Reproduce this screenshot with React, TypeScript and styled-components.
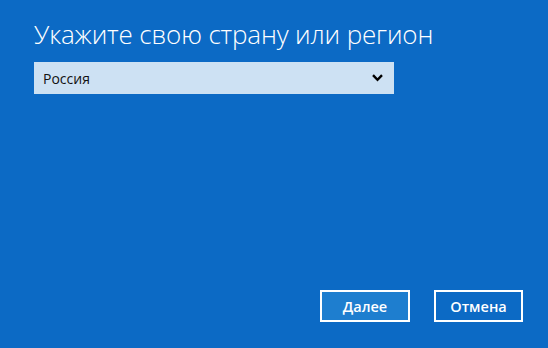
import React from "react";
import styled, { createGlobalStyle } from "styled-components";

const Global = createGlobalStyle`
  html, body { margin: 0; padding: 0; }
  body { background: #0c6ac5; width: 548px; height: 348px; overflow: hidden; }
`;

const Page = styled.div`
  box-sizing: border-box;
  width: 548px;
  height: 348px;
  background: #0c6ac5;
  padding: 18px 25px 26px 34px;
  display: flex;
  flex-direction: column;
  font-family: "Open Sans", "Noto Sans", sans-serif;
`;

const Title = styled.h1`
  margin: 0;
  font-family: "Open Sans", "Noto Sans", sans-serif;
  font-weight: 300;
  font-size: 26px;
  line-height: 32px;
  color: #ffffff;
  letter-spacing: -0.15px;
`;

const Select = styled.div`
  margin-top: 12px;
  width: 360px;
  height: 32px;
  box-sizing: border-box;
  background: #cde1f3;
  display: flex;
  align-items: center;
  justify-content: space-between;
  padding: 0 11px 0 9px;
  font-family: "Open Sans", "Noto Sans", sans-serif;
  font-size: 14px;
  color: #111;
`;

const Footer = styled.div`
  margin-top: auto;
  display: flex;
  justify-content: flex-end;
  gap: 24px;
`;

const Button = styled.button<{ $primary?: boolean }>`
  box-sizing: border-box;
  width: ${(p) => (p.$primary ? "90px" : "89px")};
  height: 32px;
  border: 2px solid #ffffff;
  background: ${(p) => (p.$primary ? "#1e7ecf" : "transparent")};
  color: #ffffff;
  font-family: "Open Sans", "Noto Sans", sans-serif;
  font-weight: 600;
  font-size: 14.5px;
  padding: 0;
  display: flex;
  align-items: center;
  justify-content: center;
`;

const Chevron = () => (
  <svg width="11" height="8" viewBox="0 0 11 8">
    <path d="M1 1.2 L5.5 5.8 L10 1.2" fill="none" stroke="#000" strokeWidth="2.4" />
  </svg>
);

export default function App() {
  return (
    <>
      <Global />
      <Page>
        <Title>Укажите свою страну или регион</Title>
        <Select>
          <span>Россия</span>
          <Chevron />
        </Select>
        <Footer>
          <Button $primary>Далее</Button>
          <Button>Отмена</Button>
        </Footer>
      </Page>
    </>
  );
}
